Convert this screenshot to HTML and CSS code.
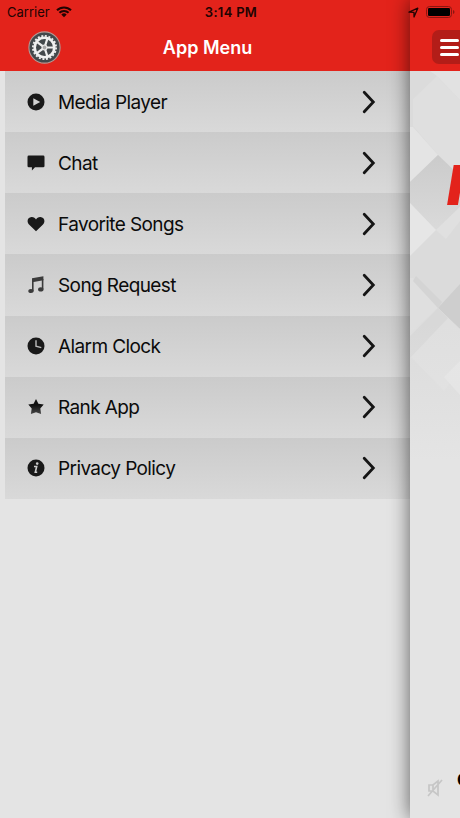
FILE: index.html
```html
<!DOCTYPE html>
<html lang="en">
<head>
    <meta charset="UTF-8">
    <meta name="viewport" content="width=device-width, initial-scale=1">
    <title>App Menu</title>
    <link rel="stylesheet" href="styles.css">
</head>
<body>

<div class="app">
    <div class="status-bar">
        <div class="carrier">
            <span>Carrier</span>
            <svg width="16" height="12" viewBox="0 0 16 12">
                <path d="M1 4.3a10 10 0 0 1 14 0M3.4 6.8a6.6 6.6 0 0 1 9.2 0" fill="none" stroke="#210302" stroke-width="2.1"/>
                <path d="M8 11.3L5.3 8.6a3.8 3.8 0 0 1 5.4 0z" fill="#210302"/>
            </svg>
        </div>
        <span class="time">3:14 PM</span>
        <div class="indicators">
            <svg width="11" height="11" viewBox="0 0 11 11">
                <path d="M1 5.2L9.8 1.2 6 10V5.4z" fill="none" stroke="#210302" stroke-width="1.3" stroke-linejoin="round"/>
            </svg>
            <svg width="29" height="12" viewBox="0 0 29 12">
                <rect x=".5" y=".5" width="25" height="11" rx="3" fill="none" stroke="#8b1510"/>
                <rect x="2" y="2" width="22" height="8" rx="1.3"/>
                <path d="M27 4v4q1.5-.6 1.5-2T27 4z" fill="#8b1510"/>
            </svg>
        </div>
    </div>

    <div class="menu">
        <div class="menu-header">
            <svg class="gear" width="33" height="33" viewBox="0 0 33 33">
                <circle cx="16.5" cy="16.5" r="15.6" fill="#42484b" stroke="#b29a96" stroke-width="1.1"/>
                <circle cx="16.5" cy="16.5" r="11.6" fill="none" stroke="#eee" stroke-width="1.8" stroke-dasharray="2 1.645"/>
                <circle cx="16.5" cy="16.5" r="9.8" fill="none" stroke="#f0f0f0" stroke-width="2.6"/>
                <path d="M16.5 16.5H25.5M16.5 16.5L19.3 25.1M16.5 16.5L9.2 21.8M16.5 16.5L9.2 11.2M16.5 16.5L19.3 7.9" stroke="#eee" stroke-width="2.2"/>
                <circle cx="16.5" cy="16.5" r="3" fill="#e4e4e4"/>
                <circle cx="16.5" cy="16.5" r="1.3" fill="#aaa" stroke="#888" stroke-width=".6"/>
            </svg>
            <h1>App Menu</h1>
        </div>
        <ul class="menu-list">
            <li>
                <svg class="icon" viewBox="0 0 18 18"><circle cx="9" cy="9" r="8.5"/><path d="M6.3 5.3v7.4L13.2 9z" fill="#d2d2d2"/></svg>
                <span>Media Player</span>
                <svg class="arrow" viewBox="0 0 14 24"><path d="M2.2 2.2L11.3 12 2.2 21.8"/></svg>
            </li>
            <li>
                <svg class="icon" viewBox="0 0 18 18"><path d="M1.8 1.6h14.4q1.3 0 1.3 1.3v9q0 1.3-1.3 1.3H8L4.9 16.4V13.2H1.8Q.5 13.2.5 11.9v-9Q.5 1.6 1.8 1.6z"/></svg>
                <span>Chat</span>
                <svg class="arrow" viewBox="0 0 14 24"><path d="M2.2 2.2L11.3 12 2.2 21.8"/></svg>
            </li>
            <li>
                <svg class="icon" viewBox="0 0 18 18"><path d="M9 16.2L2 9.5C-.6 6.7.5 2.2 4.6 2 6.6 1.9 8.2 3 9 4.4 9.8 3 11.4 1.9 13.4 2 17.5 2.2 18.6 6.7 16 9.5z"/></svg>
                <span>Favorite Songs</span>
                <svg class="arrow" viewBox="0 0 14 24"><path d="M2.2 2.2L11.3 12 2.2 21.8"/></svg>
            </li>
            <li>
                <svg class="icon note" viewBox="0 0 18 18"><path d="M5 2.3L16.4.3v4L6.6 6v9.2H5z"/><path d="M14.8 3h1.6v10.3h-1.6z"/><ellipse cx="4" cy="15" rx="2.7" ry="2.1"/><ellipse cx="13.8" cy="13.4" rx="2.7" ry="2.1"/></svg>
                <span>Song Request</span>
                <svg class="arrow" viewBox="0 0 14 24"><path d="M2.2 2.2L11.3 12 2.2 21.8"/></svg>
            </li>
            <li>
                <svg class="icon" viewBox="0 0 18 18"><circle cx="9" cy="9" r="8.5"/><path d="M9 3.2V9.2l5.3 1.4" fill="none" stroke="#bdbdbd" stroke-width="1.4"/></svg>
                <span>Alarm Clock</span>
                <svg class="arrow" viewBox="0 0 14 24"><path d="M2.2 2.2L11.3 12 2.2 21.8"/></svg>
            </li>
            <li>
                <svg class="icon" viewBox="0 0 18 18">
                    <defs><linearGradient id="star" x2="0" y2="1"><stop offset=".4" stop-color="#111"/><stop offset="1" stop-color="#484848"/></linearGradient></defs>
                    <path d="M9 1l2.4 4.8 5.3.8-3.4 3.9.8 5.6L9 14.3l-5.1 1.8.8-5.6L1.3 6.6 6.6 5.800z" fill="url(#star)"/>
                </svg>
                <span>Rank App</span>
                <svg class="arrow" viewBox="0 0 14 24"><path d="M2.2 2.2L11.3 12 2.2 21.8"/></svg>
            </li>
            <li>
                <svg class="icon" viewBox="0 0 18 18"><circle cx="9" cy="9" r="8.5"/><circle cx="10.2" cy="4.6" r="1.3" fill="#ccc"/><path d="M7 7.5h2.7L8.3 13.3h1.9" fill="none" stroke="#ccc" stroke-width="1.6"/></svg>
                <span>Privacy Policy</span>
                <svg class="arrow" viewBox="0 0 14 24"><path d="M2.2 2.2L11.3 12 2.2 21.8"/></svg>
            </li>
        </ul>
    </div>

    <div class="player">
        <div class="player-header">
            <button class="menu-btn" aria-label="Menu"><i></i><i></i><i></i></button>
        </div>
        <div class="cover">
            <svg class="facets" width="50" height="390" viewBox="0 0 50 390">
                <defs>
                    <linearGradient id="fade" x2="0" y2="1"><stop offset=".65" stop-color="#e4e4e4" stop-opacity="0"/><stop offset="1" stop-color="#e4e4e4"/></linearGradient>
                    <linearGradient id="facet" x2="0" y2="1"><stop offset="0" stop-color="#cbcbcb"/><stop offset="1" stop-color="#dadada"/></linearGradient>
                </defs>
                <path d="M0 0h50v390H0z" fill="#dbdbdb"/>
                <path d="M27 5L50 29V105L28 84 3 55V28z" fill="#dfdfdf"/>
                <path d="M27 5L50 29V0H20z" fill="#e2e2e2"/>
                <path d="M3 56L28 84 0 111V56z" fill="#e4e4e4"/>
                <path d="M28 84L50 105V136L26 159 0 132V111z" fill="url(#facet)"/>
                <path d="M0 132L26 159 0 185z" fill="#e6e6e6"/>
                <path d="M26 159L50 136V150L36 168z" fill="#e0e0e0"/>
                <path d="M3 207L28 237 0 263V207z" fill="#dfdfdf"/>
                <path d="M3 210L6 205 32 231 28 237z" fill="#d4d4d4"/>
                <path d="M50 213V258L28 237z" fill="#cecece"/>
                <path d="M28 237L50 258V300L34 320 0 285V263z" fill="#dfdfdf"/>
                <path d="M28 237L0 265v22L38 247z" fill="#d8d8d8"/>
                <path d="M50 290L34 306 50 324z" fill="#e6e6e6"/>
                <path d="M0 0h50v390H0z" fill="url(#fade)"/>
            </svg>
            <span class="logo">I</span>
        </div>
        <div class="player-footer">
            <svg width="18" height="20" viewBox="0 0 18 20">
                <path d="M3 7h4l5-4v14l-5-4H3zM2 18L16 2M7 7v6" fill="none" stroke="#c6c6c6" stroke-width="1.7"/>
            </svg>
            <span class="track">C</span>
        </div>
    </div>
</div>

</body>
</html>
```

FILE: styles.css
```css
body {
    margin: 0;
    font-family: Inter, "Liberation Sans", sans-serif;
    background-color: #e4e4e4;
    color: #0b0b0b;
}

.app {
    position: relative;
    display: flex;
    width: 460px;
    height: 818px;
    overflow: hidden;
}

/* sits over both panels */
.status-bar {
    position: absolute;
    top: 0;
    left: 0;
    z-index: 3;
    display: grid;
    grid-template-columns: 1fr auto 1fr;
    align-items: center;
    width: 100%;
    height: 24px;
    padding: 0 5px 0 7px;
    box-sizing: border-box;
    font-size: 13px;
    color: #210302;
}

.carrier {
    display: flex;
    align-items: center;
    gap: 6px;
}

.time {
    font-weight: 600;
    letter-spacing: 0.3px;
}

.indicators {
    display: flex;
    align-items: center;
    justify-content: flex-end;
    gap: 7px;
}

.menu {
    width: 410px;
    flex-shrink: 0;
    background-color: #e4e4e4;
}

.menu-header {
    display: grid;
    grid-template-columns: 1fr auto 1fr;
    align-items: center;
    height: 71px;
    padding: 23px 0 0 28px;
    box-sizing: border-box;
    background-color: #e3231b;
}

.menu-header h1 {
    margin: 0 23px 0 0;
    font-size: 18px;
    font-weight: 600;
    color: #fff;
}

.menu-list {
    display: flex;
    flex-direction: column;
    height: 428px;
    margin: 0 0 0 5px;
    padding: 0;
    list-style: none;
}

.menu-list li {
    flex: 1;
    display: flex;
    align-items: center;
    padding: 0 34px 0 22px;
    background: linear-gradient(#cbcbcb, #d9d9d9);
    font-size: 19px;
    letter-spacing: -0.6px;
}

.menu-list span {
    flex: 1;
    margin-left: 13px;
    padding-top: 1px;
}

.icon {
    width: 18px;
    height: 18px;
    fill: #191919;
}

.note {
    fill: #3b3b3b;
}

.arrow {
    width: 14px;
    height: 24px;
    fill: none;
    stroke: #151515;
    stroke-width: 2.8;
    stroke-linecap: round;
}

.player {
    position: relative;
    z-index: 2;
    display: flex;
    flex-direction: column;
    width: 50px;
    background-color: #e4e4e4;
    box-shadow: 0 0 20px rgba(0, 0, 0, 0.6);
}

.player-header {
    height: 71px;
    padding: 30px 0 0 22px;
    box-sizing: border-box;
    background-color: #e3231b;
    overflow: hidden;
}

.menu-btn {
    display: flex;
    flex-direction: column;
    align-items: center;
    justify-content: center;
    gap: 4px;
    width: 34px;
    height: 34px;
    padding: 0;
    border: none;
    border-radius: 7px;
    background-color: #b31d18;
}

.menu-btn i {
    width: 19px;
    height: 3px;
    border-radius: 2px;
    background-color: #fff;
}

.cover {
    display: grid;
    flex: 1;
    overflow: hidden;
}

.facets,
.logo {
    grid-area: 1 / 1;
}

.logo {
    margin: 80px 0 0 37px;
    font-size: 55px;
    font-style: italic;
    font-weight: 900;
    line-height: 68px;
    color: #e3231b;
}

.player-footer {
    display: flex;
    align-items: center;
    gap: 13px;
    height: 60px;
    padding-left: 16px;
    overflow: hidden;
}

.player-footer svg {
    flex-shrink: 0;
}

.track {
    margin-bottom: 17px;
    font-size: 17px;
    font-weight: 700;
    color: #000;
}
```
